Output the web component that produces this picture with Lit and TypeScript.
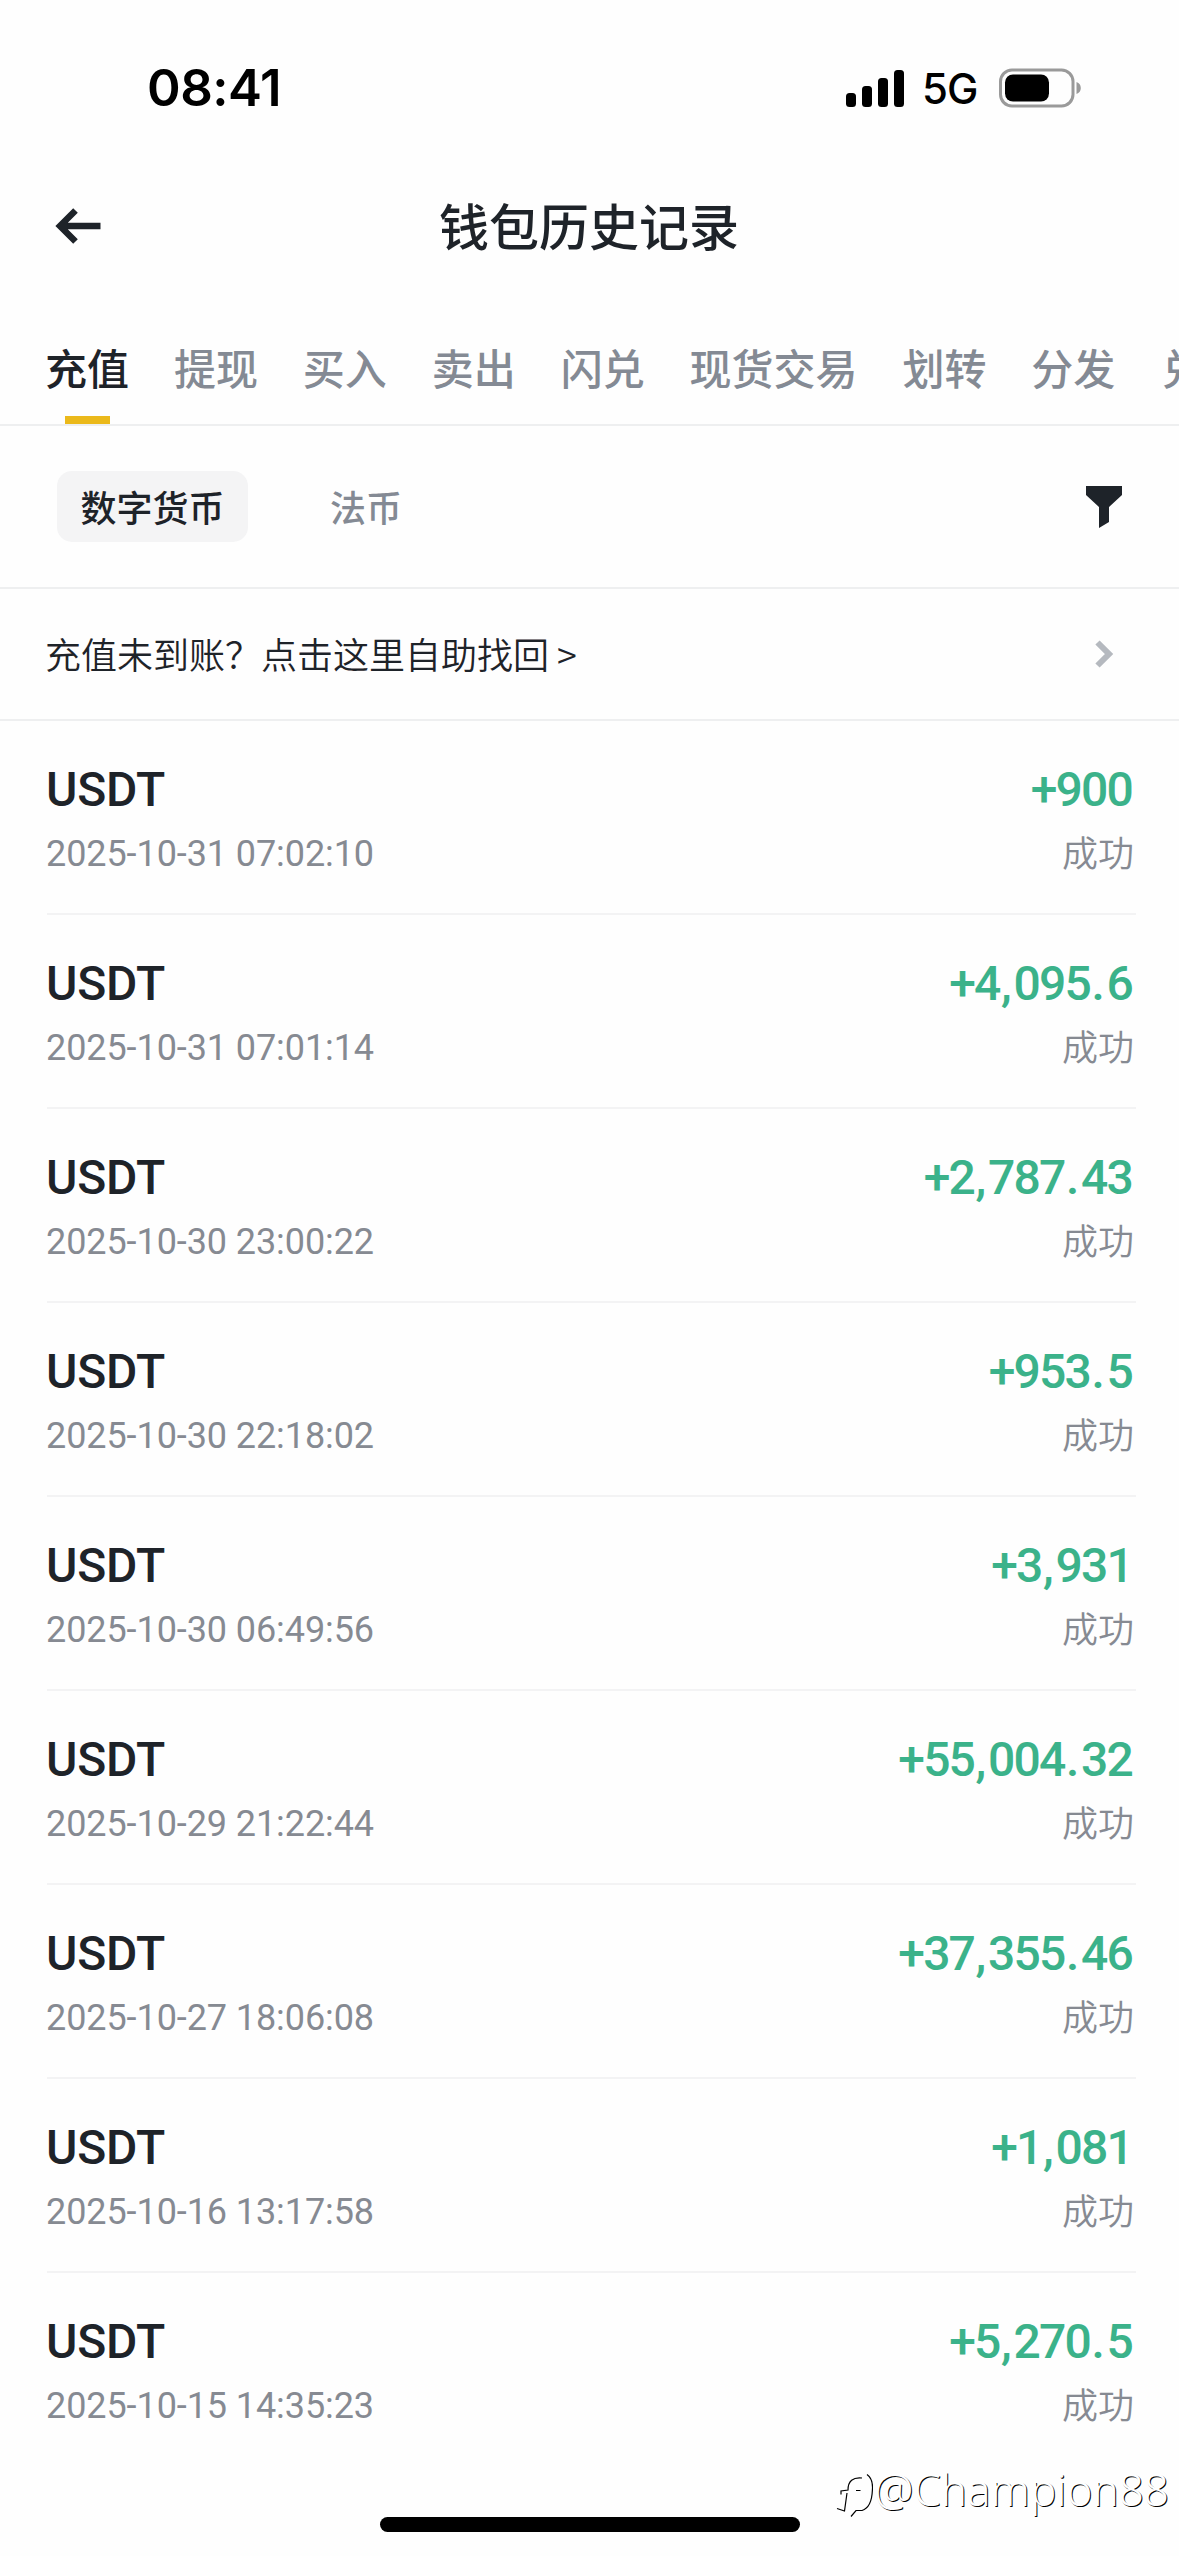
import { LitElement, html, css } from "lit";
import { customElement, property } from "lit/decorators.js";

interface Deposit {
  asset: string;
  time: string;
  amount: string;
  status: string;
}

const TABS = ["充值", "提现", "买入", "卖出", "闪兑", "现货交易", "划转", "分发", "兑"];

const DEPOSITS: Deposit[] = [
  ["2025-10-31 07:02:10", "+900"],
  ["2025-10-31 07:01:14", "+4,095.6"],
  ["2025-10-30 23:00:22", "+2,787.43"],
  ["2025-10-30 22:18:02", "+953.5"],
  ["2025-10-30 06:49:56", "+3,931"],
  ["2025-10-29 21:22:44", "+55,004.32"],
  ["2025-10-27 18:06:08", "+37,355.46"],
  ["2025-10-16 13:17:58", "+1,081"],
  ["2025-10-15 14:35:23", "+5,270.5"],
].map(([time, amount]) => ({ asset: "USDT", time, amount, status: "成功" }));

@customElement("status-bar")
class StatusBar extends LitElement {
  static styles = css`
    :host {
      display: flex;
      justify-content: space-between;
      align-items: center;
      height: 176px;
      padding: 0 97px 0 147px;
      box-sizing: border-box;
      color: #000;
      font-family: Inter, "Liberation Sans", sans-serif;
    }
    .time {
      font-size: 51px;
      font-weight: 600;
      letter-spacing: -0.5px;
      line-height: 60px;
    }
    .right {
      display: flex;
      align-items: center;
    }
    .signal {
      display: flex;
      align-items: flex-end;
      gap: 6px;
      height: 38px;
    }
    .bar {
      width: 10px;
      border-radius: 3.5px;
      background: #000;
    }
    .b1 { height: 14px; }
    .b2 { height: 21px; }
    .b3 { height: 29px; }
    .b4 { height: 37px; }
    .net {
      margin: 2px 0 0 18px;
      width: 77px;
      font-size: 42px;
      font-weight: 450;
      letter-spacing: -1px;
      line-height: 48px;
    }
    .battery { display: block; }
  `;
  render() {
    return html`
      <span class="time">08:41</span>
      <div class="right">
        <div class="signal">
          <i class="bar b1"></i><i class="bar b2"></i><i class="bar b3"></i><i class="bar b4"></i>
        </div>
        <span class="net">5G</span>
        <svg class="battery" width="83" height="40" viewBox="0 0 83 40">
          <rect x="1.5" y="2" width="72.5" height="36" rx="11.5" fill="none" stroke="#9a9a9a" stroke-width="3" />
          <rect x="6" y="6.5" width="44" height="27" rx="8" fill="#000" />
          <path d="M77.5 14v12c2.8-1 4.3-3.3 4.3-6s-1.5-5-4.3-6z" fill="#9a9a9a" />
        </svg>
      </div>
    `;
  }
}

@customElement("deposit-row")
class DepositRow extends LitElement {
  @property({ attribute: false }) item!: Deposit;
  static styles = css`
    :host {
      display: flex;
      justify-content: space-between;
      height: 194px;
      box-sizing: border-box;
      padding-top: 41px;
      border-bottom: 2px solid #f3f3f4;
    }
    :host(:last-child) { border-bottom-color: transparent; }
    .col {
      display: flex;
      flex-direction: column;
      margin-left: -1px;
    }
    .end {
      align-items: flex-end;
      padding-right: 3px;
    }
    .asset, .amount {
      font: 500 48px/56px Roboto, "Liberation Sans", sans-serif;
      color: #1e2329;
    }
    .asset { letter-spacing: -0.2px; }
    .amount {
      color: #3bb28a;
      letter-spacing: -1.8px;
      margin-right: 1px;
    }
    .point {
      margin-left: 1.5px;
      letter-spacing: 1.7px;
    }
    .time, .status {
      margin-top: 8px;
      font: 400 36px/56px Roboto, "Noto Sans CJK SC", sans-serif;
      color: #868a92;
    }
    .time { letter-spacing: -0.08px; }
    .status {
      margin-top: 5px;
      margin-right: -1px;
      font-family: "Noto Sans CJK SC", sans-serif;
      font-weight: 350;
    }
  `;
  render() {
    const { asset, time, amount, status } = this.item;
    const parts = amount.split(/([.,])/);
    return html`
      <div class="col">
        <span class="asset">${asset}</span>
        <span class="time">${time}</span>
      </div>
      <div class="col end">
        <span class="amount">${parts.map((p) => (/^[.,]$/.test(p) ? html`<span class="point">${p}</span>` : p))}</span>
        <span class="status">${status}</span>
      </div>
    `;
  }
}

@customElement("app-root")
class AppRoot extends LitElement {
  static styles = css`
    :host {
      display: flex;
      flex-direction: column;
      position: relative;
      width: 1179px;
      height: 2556px;
      overflow: hidden;
      background: #fefefe;
      color: #1e2329;
      font-family: "Noto Sans CJK SC", sans-serif;
    }
    .header {
      display: grid;
      grid-template-columns: 120px 1fr 120px;
      align-items: center;
      height: 100px;
    }
    .back { margin-left: 54px; display: block; }
    .title {
      text-align: center;
      font-size: 50px;
      font-weight: 500;
      line-height: 72px;
      padding-bottom: 4px;
      margin-left: -1px;
    }
    .tabs {
      display: flex;
      gap: 44.9px;
      height: 148px;
      padding-left: 45px;
      border-bottom: 2px solid #eeeff0;
      white-space: nowrap;
    }
    .tab {
      display: flex;
      flex-direction: column;
      align-items: center;
      justify-content: flex-end;
      flex: none;
      font-size: 42px;
      font-weight: 500;
      line-height: 60px;
      color: #848a94;
    }
    .tab::after {
      content: "";
      width: 45px;
      height: 8px;
      margin-top: 19px;
    }
    .tab.active { color: #1e2329; }
    .tab.active::after { background: #ebb91b; }
    .filters {
      display: flex;
      align-items: center;
      height: 163px;
      box-sizing: border-box;
      padding: 0 57px;
      border-bottom: 2px solid #eeeff0;
      font-size: 36px;
      font-weight: 500;
      line-height: 71px;
    }
    .chip {
      padding: 0 23.5px;
      border-radius: 15px;
      background: #f4f4f5;
    }
    .plain {
      margin-left: 82px;
      color: #848a94;
    }
    .funnel { margin-left: auto; display: block; }
    .notice {
      display: flex;
      align-items: center;
      justify-content: space-between;
      height: 132px;
      box-sizing: border-box;
      padding: 0 64px 0 45px;
      border-bottom: 2px solid #eeeff0;
      font-size: 36px;
      line-height: 52px;
      font-weight: 350;
    }
    .ask { padding-bottom: 3px; }
    .list {
      display: flex;
      flex-direction: column;
      padding: 0 43px 0 47px;
    }
    .home {
      position: absolute;
      left: 380px;
      top: 2517px;
      width: 420px;
      height: 15px;
      border-radius: 8px;
      background: #000;
    }
    .mark {
      position: absolute;
      right: 10px;
      top: 2462px;
      display: flex;
      align-items: flex-start;
      color: #fff;
      font: 300 44px/60px "Noto Sans", sans-serif;
      letter-spacing: 0;
      text-shadow: 1px 1px 0 #000;
      white-space: nowrap;
    }
    .text { margin-top: -3px; }
    .logo { display: block; margin-right: 1px; }
  `;
  render() {
    return html`
      <status-bar></status-bar>
      <header class="header">
        <svg class="back" width="48" height="40" viewBox="0 0 48 40" fill="none" stroke="#1e2329" stroke-width="6.5">
          <path d="M21.5 4.5 6 20l15.5 15.5M6.5 20H46.5" />
        </svg>
        <span class="title">钱包历史记录</span>
      </header>
      <nav class="tabs">
        ${TABS.map((t, i) => html`<span class="tab ${i === 0 ? "active" : ""}">${t}</span>`)}
      </nav>
      <div class="filters">
        <span class="chip">数字货币</span>
        <span class="plain">法币</span>
        <svg class="funnel" width="36" height="42" viewBox="0 0 36 42" fill="#1e2329">
          <path d="M0 0H36V9L23 21V36L13 42V21L0 9z" />
        </svg>
      </div>
      <div class="notice">
        <span class="ask">充值未到账？点击这里自助找回 &gt;</span>
        <svg width="20" height="28" viewBox="0 0 20 28" fill="none" stroke="#b5b9bf" stroke-width="6">
          <path d="M2.5 2.5 14 14 2.5 25.5" />
        </svg>
      </div>
      <div class="list">
        ${DEPOSITS.map((d) => html`<deposit-row .item=${d}></deposit-row>`)}
      </div>
      <div class="home"></div>
      <div class="mark">
        <svg class="logo" width="42" height="56" viewBox="0 0 42 56" fill="none" stroke="#000" stroke-width="1.2">
          <path d="M31 16C22 15 17 19 17 28L10 29V32.5M16 31 13.5 49 6 46.5M25 28.5H29.5" />
          <path d="M36 12.5C41 16 42 21 41.4 28C41 38 39 46 31 48.5H25L20 54.5" />
        </svg>
        <span class="text">@Champion88</span>
      </div>
    `;
  }
}
